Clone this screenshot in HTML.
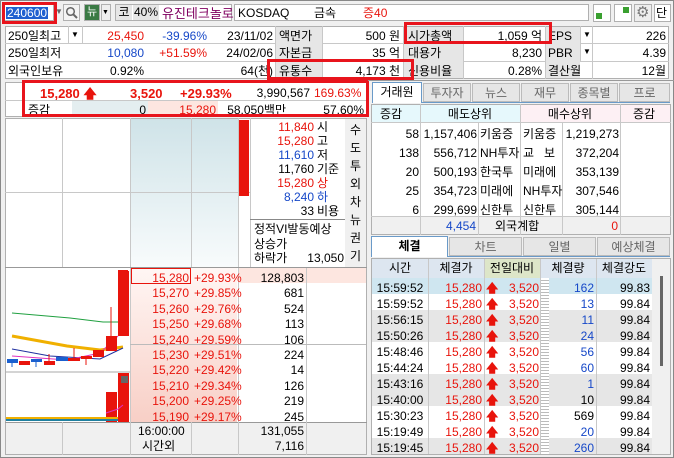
<!DOCTYPE html>
<html><head><meta charset="utf-8"><style>
*{margin:0;padding:0;box-sizing:border-box}
body{width:674px;height:458px;background:#f0f0f0;font-family:"Liberation Sans","Noto Sans CJK KR",sans-serif;font-size:12px;color:#000;position:relative;overflow:hidden}
.a{position:absolute;white-space:nowrap;line-height:1}
.r{color:#e8140c}.b{color:#1648c8}
.bx{position:absolute;border:1px solid #b0b0b0}
.tr{text-align:right}.tc{text-align:center}
.g{background:#e6e6e6}
.rb{position:absolute;border:3px solid #e8141c}
.hl{position:absolute;height:1px;background:#c8c8c8}
.vl{position:absolute;width:1px;background:#c8c8c8}
</style></head><body>
<div class="bx" style="left:0;top:0;width:674px;height:458px;border-color:#888"></div>
<!-- top toolbar -->
<div class="bx" style="left:4px;top:4px;width:50px;height:17px;background:#fff"></div>
<div class="a" style="left:6px;top:7px;background:#2060d0;color:#fff;padding:0 1px">240600</div>
<div class="a" style="left:55px;top:8px;color:#666;font-size:8px">▼</div>
<div class="bx" style="left:63px;top:4px;width:17px;height:17px;background:#f4f4f4"></div>
<svg class="a" style="left:65px;top:6px" width="14" height="14"><circle cx="5.5" cy="5.5" r="3.8" fill="none" stroke="#666" stroke-width="1.5"/><line x1="8.3" y1="8.3" x2="12" y2="12" stroke="#666" stroke-width="2"/></svg>
<div class="bx" style="left:84px;top:4px;width:16px;height:17px;background:#3a7a44;color:#fff;font-size:11px;text-align:center;line-height:15px">뉴</div>
<div class="bx" style="left:101px;top:4px;width:10px;height:17px;background:#eee"></div>
<div class="a" style="left:102px;top:9px;font-size:7px">▼</div>
<div class="bx" style="left:115px;top:4px;width:117px;height:17px;background:#fff"></div>
<div class="a g" style="left:116px;top:5px;width:16px;height:15px;text-align:center;line-height:15px">코</div>
<div class="a g" style="left:133px;top:5px;width:26px;height:15px;text-align:center;line-height:15px">40%</div>
<div class="a" style="left:162px;top:7px;color:#800060;font-size:13px">유진테크놀로</div>
<div class="bx" style="left:234px;top:4px;width:355px;height:17px;background:#fff"></div>
<div class="a" style="left:238px;top:7px">KOSDAQ</div>
<div class="a" style="left:314px;top:7px">금속</div>
<div class="a r" style="left:363px;top:7px">증40</div>
<div class="bx" style="left:593px;top:4px;width:18px;height:18px;background:#fff"></div>
<div class="a" style="left:596px;top:13px;width:6px;height:6px;background:#3aa030"></div>
<div class="bx" style="left:614px;top:4px;width:18px;height:18px;background:#fff"></div>
<div class="a" style="left:623px;top:7px;width:6px;height:6px;background:#3aa030"></div>
<div class="bx" style="left:634px;top:4px;width:18px;height:18px;background:#eee"></div>
<div class="a" style="left:636px;top:5px;font-size:15px;color:#777">⚙</div>
<div class="bx" style="left:654px;top:4px;width:17px;height:18px;background:#fff"></div>
<div class="a" style="left:656px;top:7px;font-size:12px">단</div>
<div class="rb" style="left:2px;top:2px;width:55px;height:22px"></div>

<!-- info table -->
<div class="bx" style="left:5px;top:26px;width:664px;height:53px;background:#fff"></div>
<div class="hl" style="left:5px;top:43px;width:664px"></div>
<div class="hl" style="left:5px;top:61px;width:664px"></div>
<div class="a g" style="left:275px;top:27px;width:47px;height:51px"></div>
<div class="a g" style="left:403px;top:27px;width:60px;height:51px"></div>
<div class="a g" style="left:545px;top:27px;width:35px;height:51px"></div>
<div class="vl" style="left:68px;top:26px;height:17px"></div>
<div class="vl" style="left:82px;top:26px;height:17px"></div>
<div class="vl" style="left:275px;top:26px;height:53px"></div>
<div class="vl" style="left:322px;top:26px;height:53px"></div>
<div class="vl" style="left:403px;top:26px;height:53px"></div>
<div class="vl" style="left:463px;top:26px;height:53px"></div>
<div class="vl" style="left:545px;top:26px;height:53px"></div>
<div class="vl" style="left:580px;top:26px;height:35px"></div>
<div class="vl" style="left:592px;top:26px;height:53px"></div>
<div class="a" style="left:8px;top:30px">250일최고</div>
<div class="a" style="left:71px;top:31px;font-size:8px">▼</div>
<div class="a r tr" style="left:82px;top:30px;width:62px">25,450</div>
<div class="a b tr" style="left:145px;top:30px;width:62px">-39.96%</div>
<div class="a tr" style="left:208px;top:30px;width:65px">23/11/02</div>
<div class="a" style="left:279px;top:30px">액면가</div>
<div class="a tr" style="left:322px;top:30px;width:78px">500 원</div>
<div class="a" style="left:408px;top:30px">시가총액</div>
<div class="a tr" style="left:463px;top:30px;width:79px">1,059 억</div>
<div class="a" style="left:548px;top:30px">EPS</div>
<div class="a" style="left:583px;top:31px;font-size:8px">▼</div>
<div class="a tr" style="left:592px;top:30px;width:74px">226</div>
<div class="a" style="left:8px;top:47px">250일최저</div>
<div class="a b tr" style="left:82px;top:47px;width:62px">10,080</div>
<div class="a r tr" style="left:145px;top:47px;width:62px">+51.59%</div>
<div class="a tr" style="left:208px;top:47px;width:65px">24/02/06</div>
<div class="a" style="left:279px;top:47px">자본금</div>
<div class="a tr" style="left:322px;top:47px;width:78px">35 억</div>
<div class="a" style="left:408px;top:47px">대용가</div>
<div class="a tr" style="left:463px;top:47px;width:79px">8,230</div>
<div class="a" style="left:548px;top:47px">PBR</div>
<div class="a" style="left:583px;top:48px;font-size:8px">▼</div>
<div class="a tr" style="left:592px;top:47px;width:74px">4.39</div>
<div class="a" style="left:8px;top:65px">외국인보유</div>
<div class="a tr" style="left:82px;top:65px;width:62px">0.92%</div>
<div class="a tr" style="left:208px;top:65px;width:65px">64(천)</div>
<div class="a" style="left:279px;top:65px">유통수</div>
<div class="a tr" style="left:322px;top:65px;width:78px">4,173 천</div>
<div class="a" style="left:408px;top:65px">신용비율</div>
<div class="a tr" style="left:463px;top:65px;width:79px">0.28%</div>
<div class="a" style="left:548px;top:65px">결산월</div>
<div class="a tr" style="left:592px;top:65px;width:74px">12월</div>
<div class="rb" style="left:404px;top:22px;width:148px;height:22px"></div>
<div class="rb" style="left:267px;top:59px;width:147px;height:21px"></div>

<!-- price rows -->
<div class="bx" style="left:5px;top:82px;width:362px;height:35px;background:#fff"></div>
<div class="hl" style="left:5px;top:100px;width:362px"></div>
<div class="a" style="left:72px;top:101px;width:76px;height:15px;background:#e4eef0"></div>
<div class="a" style="left:148px;top:101px;width:70px;height:15px;background:#fde6e0"></div>
<div class="a r" style="left:40px;top:87px;font-weight:bold;font-size:13px">15,280 🡅</div>
<div class="a r" style="left:130px;top:87px;font-weight:bold;font-size:13px">3,520</div>
<div class="a r" style="left:180px;top:87px;font-weight:bold;font-size:13px">+29.93%</div>
<div class="a tr" style="left:240px;top:87px;width:70px">3,990,567</div>
<div class="a r" style="left:314px;top:87px">169.63%</div>
<div class="a" style="left:28px;top:104px">증감</div>
<div class="a tr" style="left:72px;top:104px;width:74px">0</div>
<div class="a r tr" style="left:148px;top:104px;width:68px">15,280</div>
<div class="a tr" style="left:218px;top:104px;width:68px">58,050백만</div>
<div class="a tr" style="left:288px;top:104px;width:76px">57.60%</div>
<div class="rb" style="left:22px;top:80px;width:347px;height:37px"></div>

<!-- chart/orderbook frame -->
<div class="bx" style="left:5px;top:118px;width:362px;height:337px;background:#fff"></div>
<div class="a" style="left:130px;top:119px;width:108px;height:148px;background:linear-gradient(#cfe3e8,#f8fbfc)"></div>
<div class="vl" style="left:62px;top:118px;height:150px"></div>
<div class="vl" style="left:130px;top:118px;height:337px"></div>
<div class="vl" style="left:191px;top:118px;height:337px"></div>
<div class="vl" style="left:238px;top:118px;height:337px"></div>
<div class="hl" style="left:5px;top:192px;width:245px"></div>
<div class="a" style="left:239px;top:120px;width:10px;height:76px;background:#e8140c"></div>
<div class="vl" style="left:250px;top:118px;height:150px"></div>
<div class="a r tr" style="left:250px;top:121px;width:64px">11,840</div><div class="a" style="left:317px;top:121px">시</div>
<div class="a r tr" style="left:250px;top:135px;width:64px">15,280</div><div class="a" style="left:317px;top:135px">고</div>
<div class="a b tr" style="left:250px;top:149px;width:64px">11,610</div><div class="a" style="left:317px;top:149px">저</div>
<div class="a tr" style="left:250px;top:163px;width:64px">11,760</div><div class="a" style="left:317px;top:163px">기준</div>
<div class="a r tr" style="left:250px;top:177px;width:64px">15,280</div><div class="a r" style="left:317px;top:177px">상</div>
<div class="a b tr" style="left:250px;top:191px;width:64px">8,240</div><div class="a b" style="left:317px;top:191px">하</div>
<div class="a tr" style="left:250px;top:205px;width:64px">33</div><div class="a" style="left:317px;top:205px">비용</div>
<div class="hl" style="left:250px;top:219px;width:95px;background:#888"></div>
<div class="a" style="left:254px;top:223px">정적VI발동예상</div>
<div class="a" style="left:254px;top:238px">상승가</div>
<div class="a" style="left:254px;top:252px">하락가</div>
<div class="a tr" style="left:290px;top:252px;width:54px">13,050</div>
<div class="a" style="left:345px;top:119px;width:21px;height:148px;background:#f0f0f0"></div>
<div class="a tc" style="left:346px;top:121px;width:19px;line-height:18px;white-space:normal">수<br>도<br>투<br>외<br>차<br>뉴<br>권<br>기</div>
<div class="hl" style="left:5px;top:267px;width:362px;background:#999"></div>
<!-- chart -->
<svg class="a" style="left:6px;top:268px" width="124" height="154">
<line x1="0" y1="104" x2="124" y2="104" stroke="#aaa"/>
<polyline points="6,45 64,50 97,54 112,54" fill="none" stroke="#20a040"/>
<polyline points="6,68 61,78 94,82 117,79" fill="none" stroke="#f0b000" stroke-width="3"/>
<polyline points="6,81 44,88 94,91 117,80" fill="none" stroke="#2030a0"/>
<polyline points="6,88 61,92 94,85 112,68" fill="none" stroke="#e030c0"/>
<rect x="1" y="91" width="11" height="4" fill="#1a60d0"/><line x1="6" y1="95" x2="6" y2="99" stroke="#1a60d0"/>
<rect x="13" y="93" width="11" height="4" fill="#e8140c"/>
<rect x="25" y="91" width="11" height="3" fill="#1a60d0"/><line x1="30" y1="94" x2="30" y2="99" stroke="#1a60d0"/>
<rect x="38" y="93" width="11" height="4" fill="#e8140c"/><line x1="43" y1="86" x2="43" y2="93" stroke="#e8140c"/>
<rect x="50" y="89" width="12" height="4" fill="#1a60d0"/>
<rect x="62" y="90" width="12" height="3" fill="#e8140c"/><line x1="68" y1="80" x2="68" y2="90" stroke="#e8140c"/>
<rect x="75" y="88" width="11" height="3" fill="#e8140c"/><line x1="80" y1="91" x2="80" y2="97" stroke="#e8140c"/>
<rect x="87" y="82" width="11" height="7" fill="#e8140c"/>
<rect x="100" y="68" width="11" height="15" fill="#e8140c"/>
<line x1="105" y1="39" x2="105" y2="68" stroke="#e8140c"/>
<rect x="112" y="3" width="11" height="65" fill="#e8140c"/>
<rect x="100" y="124" width="11" height="30" fill="#e8140c"/>
<rect x="112" y="105" width="11" height="49" fill="#e8140c"/>
<rect x="115" y="108" width="7" height="7" fill="#666"/>
<polyline points="100,145 112,141 117,137" fill="none" stroke="#e030c0"/>
<line x1="0" y1="150" x2="112" y2="150" stroke="#f0b000" stroke-width="2"/>
<line x1="0" y1="152" x2="112" y2="152" stroke="#2080a0" stroke-width="2"/>
</svg>
<!-- order book -->
<div class="a" style="left:131px;top:268px;width:106px;height:154px;background:linear-gradient(#fff6f4,#f8cfc6)"></div>
<div class="a" style="left:239px;top:268px;width:127px;height:15px;background:#fde6e0"></div>
<div class="vl" style="left:306px;top:268px;height:187px"></div>
<div class="hl" style="left:130px;top:344px;width:236px;background:#bbb"></div>
<div class="a" style="left:131px;top:268px;width:60px;height:16px;border:1px solid #e8140c"></div>
<div class="a" style="left:118px;top:270px;width:10px;height:4px;background:#e8140c"></div>
<div class="a r tr" style="left:130px;top:271px;width:59px;line-height:15.4px;white-space:normal">15,280<br>15,270<br>15,260<br>15,250<br>15,240<br>15,230<br>15,220<br>15,210<br>15,200<br>15,190</div>
<div class="a r" style="left:194px;top:271px;line-height:15.4px;white-space:normal">+29.93%<br>+29.85%<br>+29.76%<br>+29.68%<br>+29.59%<br>+29.51%<br>+29.42%<br>+29.34%<br>+29.25%<br>+29.17%</div>
<div class="a tr" style="left:238px;top:271px;width:66px;line-height:15.4px;white-space:normal">128,803<br>681<br>524<br>113<br>106<br>224<br>14<br>126<br>219<br>245</div>
<div class="a" style="left:6px;top:423px;width:360px;height:31px;background:#f0f0f0"></div>
<div class="hl" style="left:5px;top:422px;width:362px;background:#999"></div>
<div class="vl" style="left:62px;top:422px;height:33px"></div>
<div class="vl" style="left:130px;top:422px;height:33px"></div>
<div class="vl" style="left:191px;top:422px;height:33px"></div>
<div class="vl" style="left:238px;top:422px;height:33px"></div>
<div class="vl" style="left:306px;top:422px;height:33px"></div>
<div class="a" style="left:138px;top:425px">16:00:00</div>
<div class="a" style="left:142px;top:440px">시간외</div>
<div class="a tr" style="left:238px;top:425px;width:66px">131,055</div>
<div class="a tr" style="left:238px;top:440px;width:66px">7,116</div>

<!-- right panel tabs 1 -->
<div class="a" style="left:368px;top:80px;width:306px;height:1px;background:#999"></div>
<div class="a tc" style="left:372px;top:82px;width:50px;height:21px;background:#fff;border:1px solid #6a9ac8;border-bottom:none;line-height:19px">거래원</div>
<div class="a" style="left:422px;top:102px;width:248px;height:1px;background:#6a9ac8"></div>
<div class="a tc g" style="left:423px;top:83px;width:48px;height:19px;line-height:19px;color:#666;border:1px solid #bbb">투자자</div>
<div class="a tc g" style="left:472px;top:83px;width:48px;height:19px;line-height:19px;color:#666;border:1px solid #bbb">뉴스</div>
<div class="a tc g" style="left:521px;top:83px;width:48px;height:19px;line-height:19px;color:#666;border:1px solid #bbb">재무</div>
<div class="a tc g" style="left:570px;top:83px;width:48px;height:19px;line-height:19px;color:#666;border:1px solid #bbb">종목별</div>
<div class="a tc g" style="left:619px;top:83px;width:51px;height:19px;line-height:19px;color:#666;border:1px solid #bbb">프로</div>
<div class="bx" style="left:371px;top:104px;width:300px;height:131px;background:#fff"></div>
<div class="a" style="left:372px;top:105px;width:148px;height:17px;background:#e6f8fc"></div>
<div class="a" style="left:521px;top:105px;width:149px;height:17px;background:#fdf0f4"></div>
<div class="hl" style="left:371px;top:122px;width:300px"></div>
<div class="hl" style="left:371px;top:216px;width:300px"></div>
<div class="a" style="left:372px;top:217px;width:298px;height:17px;background:#f0f0f0"></div>
<div class="vl" style="left:420px;top:104px;height:131px"></div>
<div class="vl" style="left:478px;top:122px;height:113px"></div>
<div class="vl" style="left:520px;top:104px;height:131px"></div>
<div class="vl" style="left:562px;top:122px;height:113px"></div>
<div class="vl" style="left:620px;top:104px;height:131px"></div>
<div class="a" style="left:380px;top:108px">증감</div>
<div class="a tc" style="left:420px;top:108px;width:100px">매도상위</div>
<div class="a tc" style="left:520px;top:108px;width:100px">매수상위</div>
<div class="a" style="left:633px;top:108px">증감</div>
<div class="a tr" style="left:372px;top:125px;width:47px;line-height:19px;white-space:normal">58<br>138<br>20<br>25<br>6</div>
<div class="a tr" style="left:420px;top:125px;width:57px;line-height:19px;white-space:normal">1,157,406<br>556,712<br>500,193<br>354,723<br>299,699</div>
<div class="a" style="left:480px;top:125px;line-height:19px;white-space:normal">키움증<br>NH투자<br>한국투<br>미래에<br>신한투</div>
<div class="a" style="left:523px;top:125px;line-height:19px;white-space:normal">키움증<br>교&nbsp;&nbsp;&nbsp;보<br>미래에<br>NH투자<br>신한투</div>
<div class="a tr" style="left:562px;top:125px;width:57px;line-height:19px;white-space:normal">1,219,273<br>372,204<br>353,139<br>307,546<br>305,144</div>
<div class="a b tr" style="left:420px;top:220px;width:56px">4,454</div>
<div class="a" style="left:495px;top:220px">외국계합</div>
<div class="a r tr" style="left:562px;top:220px;width:56px">0</div>

<!-- tabs 2 -->
<div class="a tc" style="left:371px;top:236px;width:77px;height:21px;background:#fff;border:1px solid #6a9ac8;border-bottom:none;line-height:19px;font-weight:bold">체결</div>
<div class="a" style="left:448px;top:256px;width:222px;height:1px;background:#6a9ac8"></div>
<div class="a tc g" style="left:449px;top:237px;width:73px;height:19px;line-height:19px;color:#666;border:1px solid #bbb">차트</div>
<div class="a tc g" style="left:523px;top:237px;width:73px;height:19px;line-height:19px;color:#666;border:1px solid #bbb">일별</div>
<div class="a tc g" style="left:597px;top:237px;width:73px;height:19px;line-height:19px;color:#666;border:1px solid #bbb">예상체결</div>
<!-- trade table -->
<div class="bx" style="left:371px;top:258px;width:300px;height:197px;background:#f0f0f0"></div>
<div class="a" style="left:372px;top:259px;width:280px;height:19px;background:#dde6f0"></div>
<div class="a" style="left:484px;top:259px;width:56px;height:19px;background:#dde6c8"></div>
<div class="a tc" style="left:372px;top:262px;width:56px">시간</div>
<div class="a tc" style="left:428px;top:262px;width:56px">체결가</div>
<div class="a tc" style="left:484px;top:262px;width:56px">전일대비</div>
<div class="a tc" style="left:540px;top:262px;width:56px">체결량</div>
<div class="a tc" style="left:596px;top:262px;width:56px">체결강도</div>
<div class="a" style="left:372px;top:278px;width:280px;height:176px;background:linear-gradient(#cfe6f0 0 16px,#fff 16px 32px,#e6e6e6 32px 64px,#fff 64px 96px,#e6e6e6 96px 128px,#fff 128px 160px,#e6e6e6 160px 176px)"></div>
<div class="vl" style="left:428px;top:259px;height:195px"></div>
<div class="vl" style="left:484px;top:259px;height:195px"></div>
<div class="vl" style="left:540px;top:259px;height:195px"></div>
<div class="vl" style="left:596px;top:259px;height:195px"></div>
<div class="a" style="left:541px;top:278px;width:8px;height:176px;background:repeating-linear-gradient(#fff 0 2px,#bbb 2px 3px)"></div>
<div class="a tc" style="left:372px;top:280px;width:56px;line-height:16px;white-space:normal">15:59:52<br>15:59:52<br>15:56:15<br>15:50:26<br>15:48:46<br>15:44:24<br>15:43:16<br>15:40:00<br>15:30:23<br>15:19:49<br>15:19:45</div>
<div class="a r tr" style="left:428px;top:280px;width:54px;line-height:16px;white-space:normal">15,280<br>15,280<br>15,280<br>15,280<br>15,280<br>15,280<br>15,280<br>15,280<br>15,280<br>15,280<br>15,280</div>
<div class="a r" style="left:486px;top:280px;line-height:16px;white-space:normal;font-weight:bold">🡅<br>🡅<br>🡅<br>🡅<br>🡅<br>🡅<br>🡅<br>🡅<br>🡅<br>🡅<br>🡅</div>
<div class="a r tr" style="left:496px;top:280px;width:43px;line-height:16px;white-space:normal">3,520<br>3,520<br>3,520<br>3,520<br>3,520<br>3,520<br>3,520<br>3,520<br>3,520<br>3,520<br>3,520</div>
<div class="a b tr" style="left:540px;top:280px;width:54px;line-height:16px;white-space:normal">162<br>13<br>11<br>24<br>56<br>60<br>1<br><span style="color:#000">10</span><br><span style="color:#000">569</span><br>20<br>260</div>
<div class="a tr" style="left:596px;top:280px;width:54px;line-height:16px;white-space:normal">99.83<br>99.84<br>99.84<br>99.84<br>99.84<br>99.84<br>99.84<br>99.84<br>99.84<br>99.84<br>99.84</div>
<div class="a" style="left:660px;top:276px;width:3px;height:90px;background:#666"></div>
</body></html>
